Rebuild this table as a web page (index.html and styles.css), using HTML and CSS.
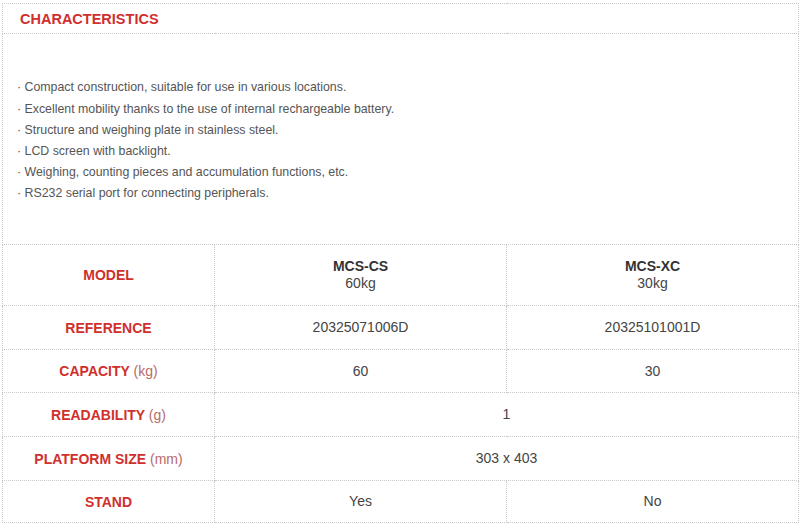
FILE: index.html
```html
<!DOCTYPE html>
<html>
<head>
<meta charset="utf-8">
<link rel="stylesheet" href="styles.css">
</head>
<body>
<div class="page">
<table class="spec">
  <colgroup>
    <col class="c-label">
    <col class="c-val">
    <col class="c-val">
  </colgroup>
  <tr class="r-head">
    <td colspan="3" class="title">CHARACTERISTICS</td>
  </tr>
  <tr class="r-list">
    <td colspan="3" class="list">
      <ul>
        <li>· Compact construction, suitable for use in various locations.</li>
        <li>· Excellent mobility thanks to the use of internal rechargeable battery.</li>
        <li>· Structure and weighing plate in stainless steel.</li>
        <li>· LCD screen with backlight.</li>
        <li>· Weighing, counting pieces and accumulation functions, etc.</li>
        <li>· RS232 serial port for connecting peripherals.</li>
      </ul>
    </td>
  </tr>
  <tr class="r-model">
    <td class="label">MODEL</td>
    <td class="val"><span class="model">MCS-CS</span><br>60kg</td>
    <td class="val"><span class="model">MCS-XC</span><br>30kg</td>
  </tr>
  <tr class="r-44">
    <td class="label">REFERENCE</td>
    <td class="val">20325071006D</td>
    <td class="val">20325101001D</td>
  </tr>
  <tr class="r-43">
    <td class="label">CAPACITY <span class="unit">(kg)</span></td>
    <td class="val">60</td>
    <td class="val">30</td>
  </tr>
  <tr class="r-44">
    <td class="label">READABILITY <span class="unit">(g)</span></td>
    <td class="val" colspan="2">1</td>
  </tr>
  <tr class="r-44">
    <td class="label">PLATFORM SIZE <span class="unit">(mm)</span></td>
    <td class="val" colspan="2">303 x 403</td>
  </tr>
  <tr class="r-42">
    <td class="label">STAND</td>
    <td class="val">Yes</td>
    <td class="val">No</td>
  </tr>
</table>
</div>
</body>
</html>
```

FILE: styles.css
```css
html, body {
  margin: 0;
  padding: 0;
  background: #ffffff;
}

.page {
  padding: 3px 2px 0 2px;
}

.spec {
  width: 796px;
  border-collapse: collapse;
  table-layout: fixed;
  font-family: "Liberation Sans", Arial, sans-serif;
}

.c-label { width: 212px; }
.c-val { width: 292px; }

.spec td {
  border: 1px dotted #c8c8c8;
  padding: 0;
}

.r-head td { height: 28px; }
.r-list td { height: 206px; }
.r-model td { height: 60px; }
.r-44 td { height: 43px; }
.r-43 td { height: 42px; }
.r-42 td { height: 41px; }

.title {
  color: #cf2f2f;
  font-weight: bold;
  font-size: 14.5px;
  padding: 1px 0 0 17px !important;
}

.list {
  padding-top: 4px !important;
}

.list ul {
  list-style: none;
  margin: 0;
  padding: 0 0 0 14px;
}

.list li {
  font-size: 12.35px;
  line-height: 21.2px;
  color: #555555;
}

.label {
  text-align: center;
  color: #d0302c;
  font-weight: bold;
  font-size: 14px;
}

.unit {
  font-weight: normal;
  color: #b96a6a;
}

.val {
  text-align: center;
  color: #444444;
  font-size: 14px;
  line-height: 17px;
}

.model {
  font-weight: bold;
  color: #333333;
}
```
